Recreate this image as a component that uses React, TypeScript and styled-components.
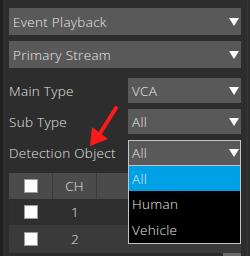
import React from "react";
import styled, { createGlobalStyle } from "styled-components";

const Global = createGlobalStyle`
  html, body { margin: 0; padding: 0; background: #2d2d2d; }
  body { width: 250px; height: 256px; overflow: hidden; font-family: "Open Sans", "DejaVu Sans", sans-serif; font-weight: 300; letter-spacing: 0.3px; }
`;

const Panel = styled.div`
  position: relative;
  width: 250px;
  height: 256px;
  box-sizing: border-box;
  border-left: 3px solid #1f1f1f;
  padding: 8px 9px 0 6px;
  display: flex;
  flex-direction: column;
  background: #2d2d2d;
  overflow: hidden;
`;

const SelectBox = styled.div<{ $h: number; $focus?: boolean }>`
  height: ${(p) => p.$h}px;
  box-sizing: border-box;
  background: #595959;
  border: 1px solid ${(p) => (p.$focus ? "#c4c4c4" : "#595959")};
  display: flex;
  align-items: center;
  justify-content: space-between;
  padding: 0 1px 0 3px;
  color: #e8e8e8;
  font-size: 13.5px;
  flex: 1;
`;

const Caret = styled.span`
  width: 0;
  height: 0;
  border-left: 5px solid transparent;
  border-right: 5px solid transparent;
  border-top: 8px solid #ffffff;
`;

const Gap = styled.div<{ $h: number }>`
  height: ${(p) => p.$h}px;
  flex: none;
`;

const FormRow = styled.div<{ $h: number }>`
  display: flex;
  align-items: center;
  height: ${(p) => p.$h}px;
  flex: none;
  position: relative;
`;

const Label = styled.div`
  width: 119px;
  flex: none;
  color: #e4e4e4;
  font-size: 13.5px;
`;

const SelectWrap = styled.div`
  position: relative;
  flex: 1;
  display: flex;
  height: 100%;
`;

const Menu = styled.div`
  position: absolute;
  left: 0;
  right: 0;
  top: 26px;
  background: #000;
  border: 1px solid #c4c4c4;
  border-top: none;
  z-index: 5;
  display: flex;
  flex-direction: column;
`;

const MenuItem = styled.div<{ $sel?: boolean }>`
  height: ${(p) => (p.$sel ? 25 : 26)}px;
  display: flex;
  align-items: center;
  padding-left: 3px;
  background: ${(p) => (p.$sel ? "#00a0e6" : "#000")};
  color: #e8e8e8;
  font-size: 13.5px;
`;

const Table = styled.div`
  display: flex;
  flex-direction: column;
  flex: none;
`;

const TRow = styled.div<{ $bg: string; $h: number }>`
  display: grid;
  grid-template-columns: 44px 44px 1fr;
  height: ${(p) => p.$h}px;
  background: ${(p) => p.$bg};
`;

const Cell = styled.div<{ $div?: boolean }>`
  display: flex;
  align-items: center;
  justify-content: center;
  color: #e0e0e0;
  font-size: 13.5px;
  box-sizing: border-box;
  border-right: ${(p) => (p.$div ? "1px solid #3a3a3a" : "none")};
`;

const Check = styled.span`
  width: 14px;
  height: 14px;
  box-sizing: border-box;
  background: #ffffff;
  border: 1px solid #9a9a9a;
`;

const BottomBar = styled.div`
  height: 3px;
  background: #2b2b2b;
  display: flex;
  justify-content: flex-end;
  flex: none;
`;

const Thumb = styled.div`
  width: 18px;
  height: 3px;
  background: #6b6b6b;
`;

const RightRail = styled.div`
  position: absolute;
  right: 2px;
  top: 0;
  bottom: 0;
  width: 1px;
  background: #363636;
`;

const ArrowSvg = styled.svg`
  position: absolute;
  left: 0;
  top: 0;
  pointer-events: none;
  z-index: 6;
`;

export default function App() {
  return (
    <>
      <Global />
      <Panel>
        <FormRow $h={27}>
          <SelectBox $h={27}>
            <span>Event Playback</span>
            <Caret />
          </SelectBox>
        </FormRow>
        <Gap $h={6} />
        <FormRow $h={27}>
          <SelectBox $h={27}>
            <span>Primary Stream</span>
            <Caret />
          </SelectBox>
        </FormRow>
        <Gap $h={10} />
        <FormRow $h={25}>
          <Label>Main Type</Label>
          <SelectWrap>
            <SelectBox $h={25}>
              <span>VCA</span>
              <Caret />
            </SelectBox>
          </SelectWrap>
        </FormRow>
        <Gap $h={6} />
        <FormRow $h={25}>
          <Label>Sub Type</Label>
          <SelectWrap>
            <SelectBox $h={25}>
              <span>All</span>
              <Caret />
            </SelectBox>
          </SelectWrap>
        </FormRow>
        <Gap $h={6} />
        <FormRow $h={26}>
          <Label>Detection Object</Label>
          <SelectWrap>
            <SelectBox $h={26} $focus>
              <span>All</span>
              <Caret />
            </SelectBox>
            <Menu>
              <MenuItem $sel>All</MenuItem>
              <MenuItem>Human</MenuItem>
              <MenuItem>Vehicle</MenuItem>
            </Menu>
          </SelectWrap>
        </FormRow>
        <Gap $h={7} />
        <Table>
          <TRow $bg="#4b4b4b" $h={26}>
            <Cell $div>
              <Check />
            </Cell>
            <Cell $div>CH</Cell>
            <Cell />
          </TRow>
          <TRow $bg="#2f2f2f" $h={26}>
            <Cell>
              <Check />
            </Cell>
            <Cell>1</Cell>
            <Cell />
          </TRow>
          <TRow $bg="#3a3a3a" $h={28}>
            <Cell>
              <Check />
            </Cell>
            <Cell>2</Cell>
            <Cell />
          </TRow>
        </Table>
        <BottomBar>
          <Thumb />
        </BottomBar>
        <RightRail />
        <ArrowSvg width="250" height="256" viewBox="0 0 250 256">
          <line x1="113" y1="108" x2="96" y2="135" stroke="#ff1a1a" strokeWidth="4" strokeLinecap="round" />
          <polygon points="87,146 89,127 105,139" fill="#ff1a1a" />
        </ArrowSvg>
      </Panel>
    </>
  );
}
